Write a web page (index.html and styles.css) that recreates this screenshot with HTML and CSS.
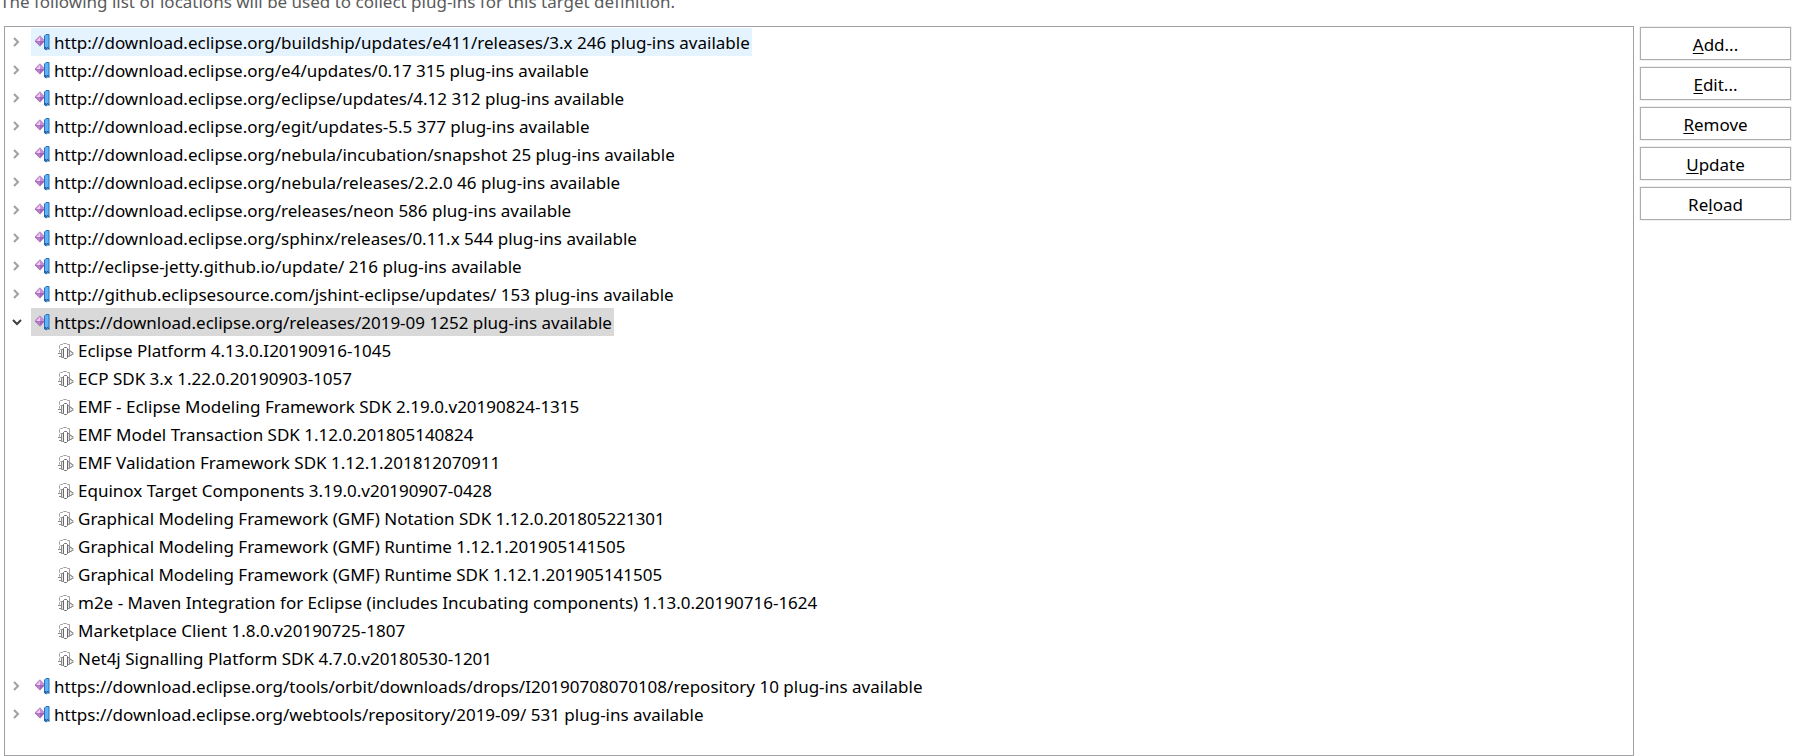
FILE: index.html
```
<!DOCTYPE html>
<html lang="en">
<head>
    <meta charset="UTF-8">
    <meta name="viewport" content="width=device-width, initial-scale=1.0">
    <title>Target Definition</title>
    <link rel="stylesheet" href="styles.css">
</head>
<body>
    <!-- Shared icons -->
    <svg class="icon-defs" aria-hidden="true">
        <symbol id="icon-closed" viewBox="0 0 10 10">
            <path d="M2 1l4 4-4 4" fill="none" stroke="#a0a0a0" stroke-width="2"/>
        </symbol>
        <symbol id="icon-open" viewBox="0 0 10 10">
            <path d="M1 3l4 4 4-4" fill="none" stroke="#404040" stroke-width="2"/>
        </symbol>
        <symbol id="icon-site" viewBox="0 0 16 18">
            <path d="M5 1.500l5 5.500-5 5.500L-.5 7z" fill="#a066b8"/>
            <path d="M5 1.500L10 7H-.5z" fill="#c78fd2"/>
            <path d="M5 3v4H1.500z" fill="#f0cdf0"/>
            <path d="M1 7.500h4v4z" fill="#b783cb"/>
            <path d="M9.500 2l1.500-1.500h3v15l-1-1-1.500 1.500-2-1z" fill="#62b1f6" stroke="#2570b8"/>
            <path d="M10 15v-2l1.500 2 1-2 1.500 2" fill="none" stroke="#25588f"/>
        </symbol>
        <symbol id="icon-feature" viewBox="0 0 16 16">
            <path d="M1.500 9.500v-2l1-1-1-1v-3l1-1h2l1-1h3l1 1h2v5l1 1" fill="#fff" stroke="#a0a0a0"/>
            <path d="M0 10.500h4M1 13.500h3" fill="none" stroke="#8c8c8c"/>
            <path d="M3.500 6.500h2v8h-2z" fill="#e4e4e4" stroke="#8c8c8c"/>
            <path d="M9.500 6.500h2v7h-2z" fill="#ddd" stroke="#8c8c8c"/>
            <path d="M5.500 5.500l1-1h2l1 1v9l-1 1h-2l-1-1z" fill="#fff" stroke="#6a6a6a"/>
            <path d="M12 8.500h1.500v1H15v2h-1.500v1H12" fill="#eee" stroke="#8c8c8c"/>
        </symbol>
    </svg>

    <header class="intro">
        <p>The following list of locations will be used to collect plug-ins for this target definition.</p>
    </header>

    <main class="main">
        <ul class="tree">
            <li>
                <div class="row">
                    <button class="toggle" type="button" aria-label="Expand"><svg><use href="#icon-closed"/></svg></button>
                    <span class="item hovered"><svg class="site"><use href="#icon-site"/></svg>http://download.eclipse.org/buildship/updates/e411/releases/3.x 246 plug-ins available</span>
                </div>
            </li>
            <li>
                <div class="row">
                    <button class="toggle" type="button" aria-label="Expand"><svg><use href="#icon-closed"/></svg></button>
                    <span class="item"><svg class="site"><use href="#icon-site"/></svg>http://download.eclipse.org/e4/updates/0.17 315 plug-ins available</span>
                </div>
            </li>
            <li>
                <div class="row">
                    <button class="toggle" type="button" aria-label="Expand"><svg><use href="#icon-closed"/></svg></button>
                    <span class="item"><svg class="site"><use href="#icon-site"/></svg>http://download.eclipse.org/eclipse/updates/4.12 312 plug-ins available</span>
                </div>
            </li>
            <li>
                <div class="row">
                    <button class="toggle" type="button" aria-label="Expand"><svg><use href="#icon-closed"/></svg></button>
                    <span class="item"><svg class="site"><use href="#icon-site"/></svg>http://download.eclipse.org/egit/updates-5.5 377 plug-ins available</span>
                </div>
            </li>
            <li>
                <div class="row">
                    <button class="toggle" type="button" aria-label="Expand"><svg><use href="#icon-closed"/></svg></button>
                    <span class="item"><svg class="site"><use href="#icon-site"/></svg>http://download.eclipse.org/nebula/incubation/snapshot 25 plug-ins available</span>
                </div>
            </li>
            <li>
                <div class="row">
                    <button class="toggle" type="button" aria-label="Expand"><svg><use href="#icon-closed"/></svg></button>
                    <span class="item"><svg class="site"><use href="#icon-site"/></svg>http://download.eclipse.org/nebula/releases/2.2.0 46 plug-ins available</span>
                </div>
            </li>
            <li>
                <div class="row">
                    <button class="toggle" type="button" aria-label="Expand"><svg><use href="#icon-closed"/></svg></button>
                    <span class="item"><svg class="site"><use href="#icon-site"/></svg>http://download.eclipse.org/releases/neon 586 plug-ins available</span>
                </div>
            </li>
            <li>
                <div class="row">
                    <button class="toggle" type="button" aria-label="Expand"><svg><use href="#icon-closed"/></svg></button>
                    <span class="item"><svg class="site"><use href="#icon-site"/></svg>http://download.eclipse.org/sphinx/releases/0.11.x 544 plug-ins available</span>
                </div>
            </li>
            <li>
                <div class="row">
                    <button class="toggle" type="button" aria-label="Expand"><svg><use href="#icon-closed"/></svg></button>
                    <span class="item"><svg class="site"><use href="#icon-site"/></svg>http://eclipse-jetty.github.io/update/ 216 plug-ins available</span>
                </div>
            </li>
            <li>
                <div class="row">
                    <button class="toggle" type="button" aria-label="Expand"><svg><use href="#icon-closed"/></svg></button>
                    <span class="item"><svg class="site"><use href="#icon-site"/></svg>http://github.eclipsesource.com/jshint-eclipse/updates/ 153 plug-ins available</span>
                </div>
            </li>
            <li>
                <div class="row">
                    <button class="toggle" type="button" aria-label="Collapse" aria-expanded="true"><svg><use href="#icon-open"/></svg></button>
                    <span class="item selected"><svg class="site"><use href="#icon-site"/></svg>https://download.eclipse.org/releases/2019-09 1252 plug-ins available</span>
                </div>
                <!-- Features of the expanded location -->
                <ul class="features">
                    <li class="row"><svg class="feature"><use href="#icon-feature"/></svg>Eclipse Platform 4.13.0.I20190916-1045</li>
                    <li class="row"><svg class="feature"><use href="#icon-feature"/></svg>ECP SDK 3.x 1.22.0.20190903-1057</li>
                    <li class="row"><svg class="feature"><use href="#icon-feature"/></svg>EMF - Eclipse Modeling Framework SDK 2.19.0.v20190824-1315</li>
                    <li class="row"><svg class="feature"><use href="#icon-feature"/></svg>EMF Model Transaction SDK 1.12.0.201805140824</li>
                    <li class="row"><svg class="feature"><use href="#icon-feature"/></svg>EMF Validation Framework SDK 1.12.1.201812070911</li>
                    <li class="row"><svg class="feature"><use href="#icon-feature"/></svg>Equinox Target Components 3.19.0.v20190907-0428</li>
                    <li class="row"><svg class="feature"><use href="#icon-feature"/></svg>Graphical Modeling Framework (GMF) Notation SDK 1.12.0.201805221301</li>
                    <li class="row"><svg class="feature"><use href="#icon-feature"/></svg>Graphical Modeling Framework (GMF) Runtime 1.12.1.201905141505</li>
                    <li class="row"><svg class="feature"><use href="#icon-feature"/></svg>Graphical Modeling Framework (GMF) Runtime SDK 1.12.1.201905141505</li>
                    <li class="row"><svg class="feature"><use href="#icon-feature"/></svg>m2e - Maven Integration for Eclipse (includes Incubating components) 1.13.0.20190716-1624</li>
                    <li class="row"><svg class="feature"><use href="#icon-feature"/></svg>Marketplace Client 1.8.0.v20190725-1807</li>
                    <li class="row"><svg class="feature"><use href="#icon-feature"/></svg>Net4j Signalling Platform SDK 4.7.0.v20180530-1201</li>
                </ul>
            </li>
            <li>
                <div class="row">
                    <button class="toggle" type="button" aria-label="Expand"><svg><use href="#icon-closed"/></svg></button>
                    <span class="item"><svg class="site"><use href="#icon-site"/></svg>https://download.eclipse.org/tools/orbit/downloads/drops/I20190708070108/repository 10 plug-ins available</span>
                </div>
            </li>
            <li>
                <div class="row">
                    <button class="toggle" type="button" aria-label="Expand"><svg><use href="#icon-closed"/></svg></button>
                    <span class="item"><svg class="site"><use href="#icon-site"/></svg>https://download.eclipse.org/webtools/repository/2019-09/ 531 plug-ins available</span>
                </div>
            </li>
        </ul>

        <div class="actions">
            <button class="btn" type="button"><u>A</u>dd...</button>
            <button class="btn" type="button"><u>E</u>dit...</button>
            <button class="btn" type="button"><u>R</u>emove</button>
            <button class="btn" type="button"><u>U</u>pdate</button>
            <button class="btn" type="button">Re<u>l</u>oad</button>
        </div>
    </main>
</body>
</html>
```
FILE: styles.css
```
* {
    margin: 0;
    padding: 0;
    box-sizing: border-box;
}

body {
    display: flex;
    flex-direction: column;
    height: 100vh;
    overflow: hidden;
    font-family: "Noto Sans", "Open Sans", sans-serif;
    font-size: 17px;
    line-height: 28px;
    background-color: #fff;
    color: #000;
}

ul {
    list-style: none;
}

.icon-defs {
    display: none;
}

/* Intro line, scrolled partly out of view */
.intro {
    display: flex;
    align-items: flex-end;
    flex: none;
    height: 16px;
    margin-bottom: 10px;
    overflow: hidden;
    color: #5a5a5a;
}

.main {
    display: flex;
    flex: 1;
    min-height: 0;
    gap: 6px;
    padding: 0 8px 0 4px;
}

/* Locations tree */
.tree {
    flex: 1;
    min-width: 0;
    padding: 1px 0;
    border: 1px solid #a0a0a5;
    overflow: auto;
}

.row {
    display: flex;
    align-items: center;
    height: 28px;
    white-space: nowrap;
}

.toggle {
    display: flex;
    align-items: center;
    justify-content: center;
    width: 26px;
    height: 28px;
    padding-right: 2px;
    border: none;
    background: none;
    cursor: pointer;
}

.toggle svg {
    width: 10px;
    height: 10px;
}

.item {
    display: flex;
    align-items: center;
    height: 28px;
    padding: 2px 2px 0 4px;
}

.item.hovered {
    background-color: #e5f3ff;
}

.item.selected {
    background-color: #d9d9d9;
}

.site {
    width: 16px;
    height: 18px;
    margin-right: 3px;
}

.features {
    padding-left: 53px;
}

.features .row {
    padding-top: 2px;
}

.feature {
    width: 16px;
    height: 16px;
    margin-right: 4px;
}

/* Buttons */
.actions {
    display: flex;
    flex-direction: column;
    gap: 7px;
    width: 151px;
    padding-top: 1px;
}

.btn {
    height: 33px;
    padding-top: 2px;
    border: 1px solid #adadad;
    background-color: #fff;
    box-shadow: 0 0 0 1px #f0f0f0;
    font: inherit;
    color: #000;
    cursor: pointer;
}

.btn u {
    text-underline-offset: 2px;
}
```
